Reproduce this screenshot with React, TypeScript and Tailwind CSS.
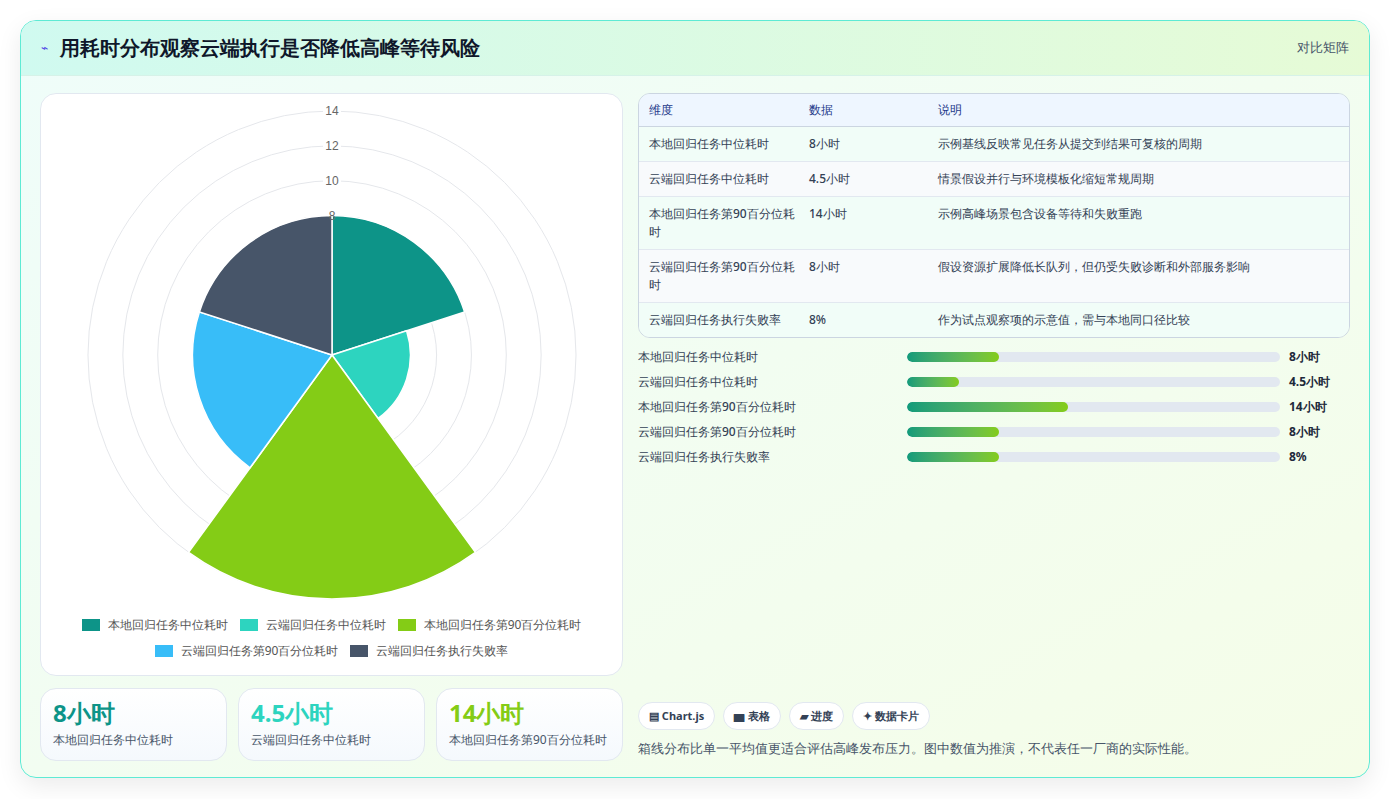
import React from "react"

const C = 331
const R = 17.43
const data = [
  { label: "本地回归任务中位耗时", v: 8, color: "#0d9488", disp: "8小时" },
  { label: "云端回归任务中位耗时", v: 4.5, color: "#2dd4bf", disp: "4.5小时" },
  { label: "本地回归任务第90百分位耗时", v: 14, color: "#84cc16", disp: "14小时" },
  { label: "云端回归任务第90百分位耗时", v: 8, color: "#38bdf8", disp: "8小时" },
  { label: "云端回归任务执行失败率", v: 8, color: "#475569", disp: "8%" },
]

const rows = [
  ["本地回归任务中位耗时", "8小时", "示例基线反映常见任务从提交到结果可复核的周期"],
  ["云端回归任务中位耗时", "4.5小时", "情景假设并行与环境模板化缩短常规周期"],
  ["本地回归任务第90百分位耗时", "14小时", "示例高峰场景包含设备等待和失败重跑"],
  ["云端回归任务第90百分位耗时", "8小时", "假设资源扩展降低长队列，但仍受失败诊断和外部服务影响"],
  ["云端回归任务执行失败率", "8%", "作为试点观察项的示意值，需与本地同口径比较"],
]

function wedge(i: number, v: number) {
  const r = v * R
  const a0 = ((-90 + i * 72) * Math.PI) / 180
  const a1 = ((-90 + (i + 1) * 72) * Math.PI) / 180
  const cx = C - 40
  const cy = 261
  const x0 = cx + r * Math.cos(a0)
  const y0 = cy + r * Math.sin(a0)
  const x1 = cx + r * Math.cos(a1)
  const y1 = cy + r * Math.sin(a1)
  return `M${cx} ${cy} L${x0} ${y0} A${r} ${r} 0 0 1 ${x1} ${y1} Z`
}

function Polar() {
  const cx = C - 40
  const cy = 261
  return (
    <svg width="582" height="518" className="block">
      {[2, 4, 6, 8, 10, 12, 14].map((t) => (
        <circle key={t} cx={cx} cy={cy} r={t * R} fill="none" stroke="#e5e7eb" strokeWidth="1" />
      ))}
      {data.map((d, i) => (
        <path key={i} d={wedge(i, d.v)} fill={d.color} stroke="#fff" strokeWidth="1.5" />
      ))}
      {[8, 10, 12, 14].map((t) => (
        <g key={t}>
          <rect x={cx - 9} y={cy - t * R - 7} width="18" height="13" fill="#fff" opacity={t === 8 ? 0 : 1} />
          <text x={cx} y={cy - t * R + 4} textAnchor="middle" fontSize="12" fill="#666" fontFamily="Liberation Sans, sans-serif">
            {t}
          </text>
        </g>
      ))}
    </svg>
  )
}

export default function App() {
  return (
    <div className="w-[1390px] h-[799px] bg-white p-5 font-['Noto_Sans_CJK_SC',sans-serif] text-[#1e293b]">
      <div className="h-[758px] rounded-2xl border border-[#5eead4] bg-gradient-to-br from-[#effdfa] to-[#f5fde8] shadow-[0_8px_24px_rgba(0,0,0,0.08)] overflow-hidden flex flex-col">
        <div className="h-[55px] flex items-center justify-between px-5 bg-gradient-to-r from-[#d0faf0] to-[#e6fbd6] border-b border-[#d6f2e8]">
          <div className="flex items-center gap-3">
            <span className="text-[#4f46e5] text-xs">⌁</span>
            <span className="text-[20px] font-bold text-[#0f172a]">用耗时分布观察云端执行是否降低高峰等待风险</span>
          </div>
          <span className="text-[13px] text-[#475569]">对比矩阵</span>
        </div>
        <div className="flex gap-[15px] px-[19px] pt-[17px]">
          <div className="w-[583px] flex flex-col gap-3">
            <div className="h-[583px] bg-white rounded-2xl border border-[#e2e8f0] flex flex-col items-center">
              <Polar />
              <div className="flex flex-wrap justify-center gap-x-3 gap-y-2 px-10 text-[12px] text-[#555] mt-1">
                {data.map((d) => (
                  <div key={d.label} className="flex items-center gap-2">
                    <span className="w-[18px] h-[12px]" style={{ background: d.color }} />
                    {d.label}
                  </div>
                ))}
              </div>
            </div>
            <div className="flex gap-[11px]">
              {data.slice(0, 3).map((d) => (
                <div key={d.label} className="w-[187px] h-[73px] rounded-2xl border border-[#e2e8f0] bg-gradient-to-b from-white to-[#f5f9fd] px-3 pt-2">
                  <div className="text-[24px] font-bold leading-[32px]" style={{ color: d.color }}>
                    {d.disp}
                  </div>
                  <div className="text-[12px] text-[#475569] mt-[2px]">{d.label}</div>
                </div>
              ))}
            </div>
          </div>
          <div className="flex-1 flex flex-col">
            <div className="rounded-xl border border-[#cbd5e1] overflow-hidden text-[12px] font-medium">
              <div className="flex bg-[#eef6ff] h-[33px] items-center border-b border-[#cbd5e1] text-[#1e3a8a]">
                <div className="w-[170px] pl-[10px]">维度</div>
                <div className="w-[129px]">数据</div>
                <div>说明</div>
              </div>
              {rows.map((r, i) => (
                <div key={i} className={`flex py-[8px] leading-[18px] text-[#334155] ${i % 2 ? "bg-[#f8fafc]" : "bg-[#f1fdf8]"} ${i < 4 ? "border-b border-[#e2e8f0]" : ""}`}>
                  <div className="w-[170px] pl-[10px] pr-2">{r[0]}</div>
                  <div className="w-[129px]">{r[1]}</div>
                  <div className="flex-1">{r[2]}</div>
                </div>
              ))}
            </div>
            <div className="mt-[10px] flex flex-col gap-[7px]">
              {data.map((d) => (
                <div key={d.label} className="flex items-center h-[18px] text-[12px] font-medium text-[#334155]">
                  <div className="w-[269px]">{d.label}</div>
                  <div className="w-[373px] h-[10px] rounded-full bg-[#e2e8f0] overflow-hidden">
                    <div className="h-full rounded-full bg-gradient-to-r from-[#0f9b7a] to-[#84cc16]" style={{ width: `${(d.v / 32.4) * 100}%` }} />
                  </div>
                  <div className="ml-[9px] font-bold text-[#1e293b]">{d.disp}</div>
                </div>
              ))}
            </div>
            <div className="mt-[236px] flex gap-[8px] text-[11px] font-bold text-[#334155]">
              {["▤ Chart.js", "▆ 表格", "▰ 进度", "✦ 数据卡片"].map((c) => (
                <span key={c} className="h-[28px] px-[10px] flex items-center rounded-full border border-[#e2e8f0] bg-white">
                  {c}
                </span>
              ))}
            </div>
            <div className="mt-[10px] text-[12.5px] font-medium text-[#475569]">箱线分布比单一平均值更适合评估高峰发布压力。图中数值为推演，不代表任一厂商的实际性能。</div>
          </div>
        </div>
      </div>
    </div>
  )
}
